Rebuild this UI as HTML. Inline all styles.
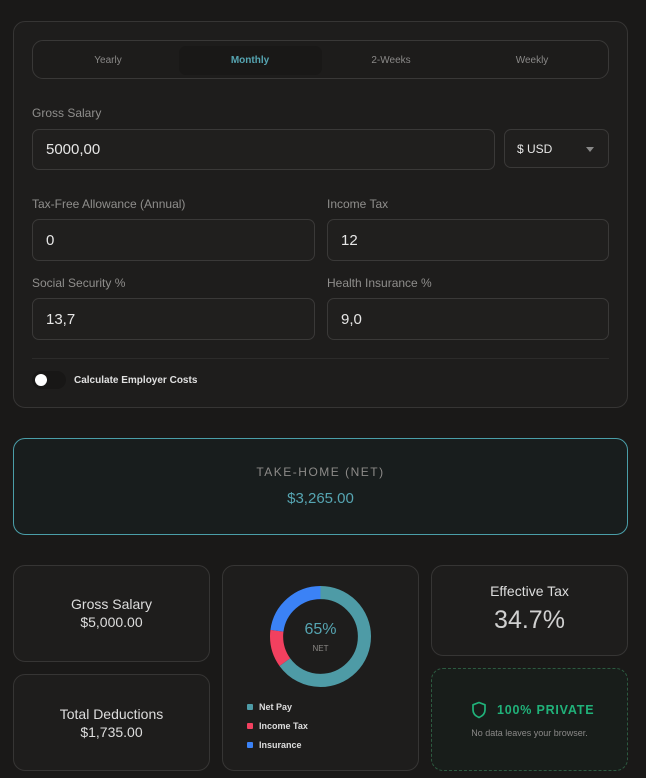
<!DOCTYPE html>
<html><head><style>
*{box-sizing:border-box;margin:0;padding:0}
body{width:646px;height:778px;background:#1a1918;font-family:"Liberation Sans",sans-serif;position:relative;overflow:hidden;color:#ddd}
.a{position:absolute}
.card{position:absolute;background:#1e1d1c;border:1px solid #363534;border-radius:12px}
.inp{position:absolute;background:#201f1e;border:1px solid #3a3938;border-radius:7px;color:#e6e6e6;font-size:15px;padding-left:13px;display:flex;align-items:center}
.lbl{position:absolute;font-size:12px;color:#8f8e8c}
.tab{position:absolute;top:55px;font-size:10px;color:#8a8988;width:100px;text-align:center}
.c{text-align:center}
</style></head><body>
<div class="card" style="left:13px;top:21px;width:615px;height:387px"></div>
<div class="a" style="left:32px;top:40px;width:577px;height:39px;border:1px solid #393837;border-radius:11px;background:#1d1c1b"></div>
<div class="a" style="left:179px;top:46px;width:143px;height:29px;border-radius:7px;background:#191817"></div>
<div class="tab" style="left:58px">Yearly</div>
<div class="tab" style="left:200px;color:#56a5b2;font-weight:bold">Monthly</div>
<div class="tab" style="left:341px">2-Weeks</div>
<div class="tab" style="left:482px">Weekly</div>
<div class="lbl" style="left:32px;top:106px">Gross Salary</div>
<div class="inp" style="left:32px;top:129px;width:463px;height:41px">5000,00</div>
<div class="inp" style="left:504px;top:129px;width:105px;height:39px;font-size:12px;padding-left:12px">$ USD<span style="position:absolute;right:14px;top:17px;border-left:4px solid transparent;border-right:4px solid transparent;border-top:5px solid #888"></span></div>
<div class="lbl" style="left:32px;top:197px">Tax-Free Allowance (Annual)</div>
<div class="lbl" style="left:327px;top:197px">Income Tax</div>
<div class="inp" style="left:32px;top:219px;width:283px;height:42px">0</div>
<div class="inp" style="left:327px;top:219px;width:282px;height:42px">12</div>
<div class="lbl" style="left:32px;top:276px">Social Security %</div>
<div class="lbl" style="left:327px;top:276px">Health Insurance %</div>
<div class="inp" style="left:32px;top:298px;width:283px;height:42px">13,7</div>
<div class="inp" style="left:327px;top:298px;width:282px;height:42px">9,0</div>
<div class="a" style="left:32px;top:358px;width:577px;height:1px;background:#2c2b2a"></div>
<div class="a" style="left:32px;top:371px;width:34px;height:18px;border-radius:9px;background:#181716"></div>
<div class="a" style="left:35px;top:374px;width:12px;height:12px;border-radius:6px;background:#fff"></div>
<div class="a" style="left:74px;top:375px;font-size:10px;color:#e0e0e0;font-weight:bold">Calculate Employer Costs</div>

<div class="a" style="left:13px;top:438px;width:615px;height:97px;border:1px solid #4a9ea8;border-radius:12px;background:#181d1d"></div>
<div class="a c" style="left:13px;top:465px;width:615px;font-size:12px;letter-spacing:1.5px;color:#8c8a88">TAKE-HOME (NET)</div>
<div class="a c" style="left:13px;top:490px;width:615px;font-size:15px;color:#56a5b2">$3,265.00</div>

<div class="card" style="left:13px;top:565px;width:197px;height:97px"></div>
<div class="a c" style="left:13px;top:596px;width:197px;font-size:14px;color:#ddd">Gross Salary<br><span style="line-height:20px">$5,000.00</span></div>
<div class="card" style="left:13px;top:674px;width:197px;height:97px"></div>
<div class="a c" style="left:13px;top:706px;width:197px;font-size:14px;color:#ddd">Total Deductions<br><span style="line-height:20px">$1,735.00</span></div>

<div class="card" style="left:222px;top:565px;width:197px;height:206px"></div>
<svg class="a" style="left:270px;top:586px" width="101" height="101" viewBox="0 0 100 100">
<g transform="rotate(-90 50 50)" fill="none" stroke-width="13">
<circle cx="50" cy="50" r="43.5" stroke="#4e9ba6" stroke-dasharray="177.6 273.3"/>
<circle cx="50" cy="50" r="43.5" stroke="#f2405f" stroke-dasharray="0 177.6 32.8 273.3"/>
<circle cx="50" cy="50" r="43.5" stroke="#3b82f6" stroke-dasharray="0 210.4 62.9 273.3"/>
</g></svg>
<div class="a c" style="left:270px;top:621px;width:101px;font-size:16px;color:#56a5b2">65%</div>
<div class="a c" style="left:270px;top:644px;width:101px;font-size:8px;color:#8a8784">NET</div>
<div class="a" style="left:247px;top:704px;width:6px;height:6px;background:#4e9ba6;border-radius:1px"></div>
<div class="a" style="left:247px;top:723px;width:6px;height:6px;background:#f2405f;border-radius:1px"></div>
<div class="a" style="left:247px;top:742px;width:6px;height:6px;background:#3b82f6;border-radius:1px"></div>
<div class="a" style="left:259px;top:698px;font-size:9px;color:#ddd;font-weight:bold;line-height:19px">Net Pay<br>Income Tax<br>Insurance</div>

<div class="card" style="left:431px;top:565px;width:197px;height:91px"></div>
<div class="a c" style="left:431px;top:583px;width:197px;font-size:14px;color:#ddd">Effective Tax</div>
<div class="a c" style="left:431px;top:606px;width:197px;font-size:25px;color:#d0d0d0">34.7%</div>
<div class="a" style="left:431px;top:668px;width:197px;height:103px;border:1px dashed #2c5a40;border-radius:12px;background:#181d1a"></div>
<svg class="a" style="left:471px;top:701px" width="16" height="18" viewBox="0 0 16 18"><path d="M8 1.5 L14 3.8 V9 C14 12.5 11.5 15 8 16.5 C4.5 15 2 12.5 2 9 V3.8 Z" fill="none" stroke="#20b27a" stroke-width="1.7" stroke-linejoin="round"/></svg>
<div class="a" style="left:497px;top:703px;font-size:12.5px;color:#20b27a;font-weight:bold;letter-spacing:0.8px">100% PRIVATE</div>
<div class="a c" style="left:431px;top:728px;width:197px;font-size:9px;color:#8a8988">No data leaves your browser.</div>
</body></html>
